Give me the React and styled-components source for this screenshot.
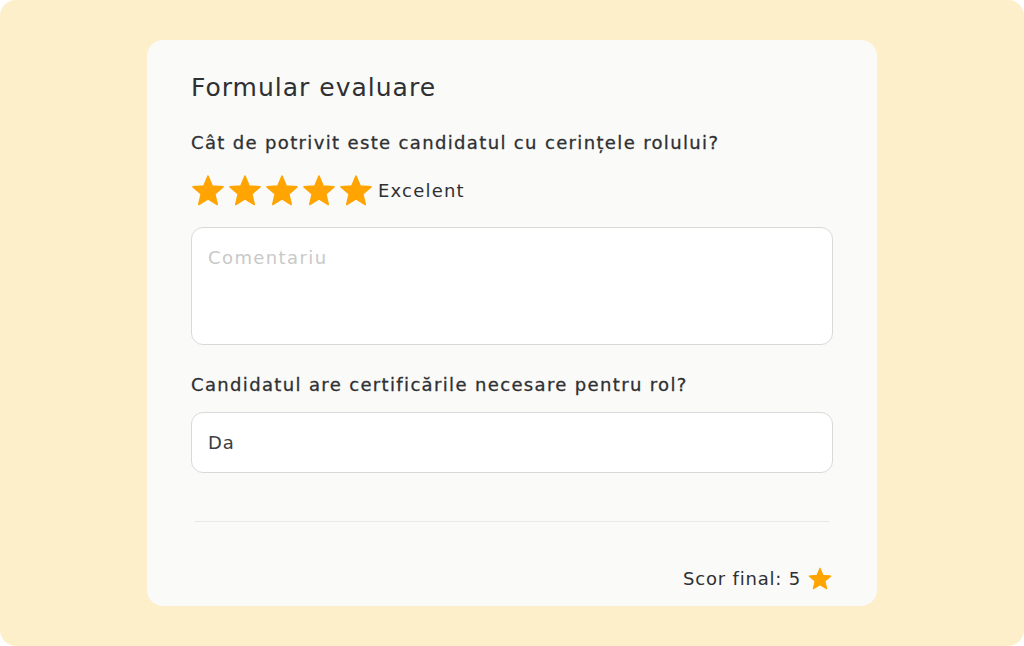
import styled, { createGlobalStyle } from 'styled-components'

const GlobalStyle = createGlobalStyle`
  body {
    margin: 0;
    background: #ffffff;
    font-family: 'DejaVu Sans', 'Noto Sans', sans-serif;
  }
`

const colors = {
  backdrop: '#fcefc9',
  card: '#fafaf8',
  text: '#2e3033',
  muted: '#c9c9c9',
  border: '#d9d9d9',
  star: '#ffa400',
}

const Page = styled.div`
  width: 1024px;
  height: 646px;
  box-sizing: border-box;
  padding-top: 40px;
  display: flex;
  justify-content: center;
  background: ${colors.backdrop};
  border-radius: 16px;
`

const Card = styled.div`
  width: 730px;
  height: 566px;
  box-sizing: border-box;
  padding: 33px 44px 14px;
  display: flex;
  flex-direction: column;
  background: ${colors.card};
  border-radius: 16px;
  color: ${colors.text};
`

const Title = styled.h1`
  margin: 0;
  font-size: 25px;
  line-height: 30px;
  font-weight: 400;
  letter-spacing: 1px;
`

const Question = styled.h2`
  margin: ${({ top }) => top}px 0 0;
  font-size: 18px;
  line-height: 24px;
  font-weight: 400;
  letter-spacing: 1.35px;
  -webkit-text-stroke: 0.3px ${colors.text};
`

const RatingRow = styled.div`
  margin-top: 17px;
  display: flex;
  align-items: center;
  height: 37px;
`

const Stars = styled.div`
  display: flex;
  gap: 1px;
  margin-left: -1px;
`

const RatingLabel = styled.span`
  margin-left: 4px;
  font-size: 18px;
  letter-spacing: 1.2px;
`

const Comment = styled.textarea`
  margin-top: 18px;
  height: 118px;
  box-sizing: border-box;
  padding: 18px 16px;
  border: 1.5px solid ${colors.border};
  border-radius: 12px;
  background: #fff;
  resize: none;
  font-family: inherit;
  font-size: 18px;
  line-height: 24px;
  letter-spacing: 1.4px;
  color: ${colors.text};
  outline: none;
  &::placeholder {
    color: ${colors.muted};
  }
`

const Field = styled.input`
  margin-top: 15px;
  height: 61px;
  box-sizing: border-box;
  padding: 0 16px;
  border: 1.5px solid ${colors.border};
  border-radius: 12px;
  background: #fff;
  font-family: inherit;
  font-size: 18px;
  letter-spacing: 1px;
  color: #3c3e42;
  outline: none;
`

const Divider = styled.hr`
  margin: 48px 4px 0;
  border: none;
  border-top: 1px solid #e9e9e9;
`

const Footer = styled.div`
  margin-top: auto;
  display: flex;
  justify-content: flex-end;
  align-items: center;
  gap: 6px;
  font-size: 18px;
  line-height: 24px;
  letter-spacing: 0.8px;
`

function Star({ size }) {
  return (
    <svg width={size} height={size} viewBox="0 0 24 24">
      <path
        d="M12 17.27L18.18 21l-1.64-7.03L22 9.24l-7.19-.61L12 2 9.19 8.63 2 9.24l5.46 4.73L5.82 21z"
        fill={colors.star}
        stroke={colors.star}
        strokeWidth="1"
        strokeLinejoin="round"
      />
    </svg>
  )
}

function App() {
  const score = 5

  return (
    <>
      <GlobalStyle />
      <Page>
        <Card>
          <Title>Formular evaluare</Title>
          <Question top={28}>Cât de potrivit este candidatul cu cerințele rolului?</Question>
          <RatingRow>
            <Stars>
              {[1, 2, 3, 4, 5].map((n) => (
                <Star key={`star-${n}`} size={36} />
              ))}
            </Stars>
            <RatingLabel>Excelent</RatingLabel>
          </RatingRow>
          <Comment placeholder="Comentariu" />
          <Question top={28}>Candidatul are certificările necesare pentru rol?</Question>
          <Field defaultValue="Da" readOnly />
          <Divider />
          <Footer>
            <span>Scor final: {score}</span>
            <Star size={26} />
          </Footer>
        </Card>
      </Page>
    </>
  )
}

export default App
